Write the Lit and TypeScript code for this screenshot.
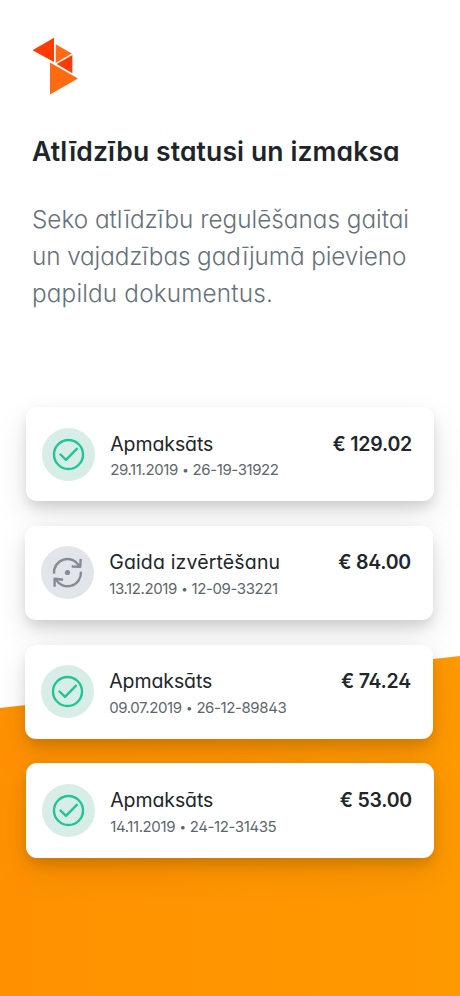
import { LitElement, html, css, svg } from "lit";
import { customElement, property } from "lit/decorators.js";
import { classMap } from "lit/directives/class-map.js";

interface Claim {
  status: "paid" | "pending";
  title: string;
  date: string;
  number: string;
  amount: string;
  inset: boolean;
}

const CLAIMS: Claim[] = [
  { status: "paid", title: "Apmaksāts", date: "29.11.2019", number: "26-19-31922", amount: "€ 129.02", inset: true },
  { status: "pending", title: "Gaida izvērtēšanu", date: "13.12.2019", number: "12-09-33221", amount: "€ 84.00", inset: false },
  { status: "paid", title: "Apmaksāts", date: "09.07.2019", number: "26-12-89843", amount: "€ 74.24", inset: false },
  { status: "paid", title: "Apmaksāts", date: "14.11.2019", number: "24-12-31435", amount: "€ 53.00", inset: true },
];

const paidIcon = svg`
  <circle cx="0" cy="0" r="14.5" />
  <path d="M-8 0 L-2.5 5.4 L8.3 -5.7" />`;

const pendingIcon = svg`
  <path d="M-13.4 1.2 A13.4 13.4 0 0 1 11.6 -6.7 M13.2 -13.6 L12.7 -5.6 L4.2 -6" />
  <path d="M13.4 -0.8 A13.4 13.4 0 0 1 -11.6 7 M-12.9 14.2 V6.3 L-4.4 7.2" />
  <circle class="dot" cx="0" cy="0" r="2.6" />`;

@customElement("claim-card")
export class ClaimCard extends LitElement {
  @property({ attribute: false }) claim!: Claim;

  static styles = css`
    :host {
      display: block;
    }
    .card {
      box-sizing: border-box;
      height: 94.3px;
      display: flex;
      align-items: flex-start;
      padding: 20.5px 21.5px 0 15.5px;
      border-radius: 11px;
      background: #fff;
      box-shadow: 0 14px 36px rgba(0, 0, 0, 0.09), 0 7px 13px -1px rgba(0, 0, 0, 0.14);
    }
    .icon {
      width: 53px;
      height: 53px;
      flex: none;
      border-radius: 50%;
    }
    .icon svg {
      display: block;
      width: 53px;
      height: 53px;
      fill: none;
      stroke-width: 2.4;
      stroke-linejoin: round;
    }
    .paid {
      background: #d8ede6;
      stroke: #20c596;
      stroke-linecap: round;
    }
    .pending {
      background: #e2e5ea;
      stroke: #858b95;
    }
    .dot {
      fill: #858b95;
      stroke: none;
    }
    .text {
      flex: 1;
      margin-left: 15.4px;
      white-space: nowrap;
    }
    .title,
    .amount {
      font-size: 19.5px;
      line-height: 28px;
      margin-top: 2px;
      color: #20262b;
    }
    .title {
      letter-spacing: -0.08px;
    }
    .title.long {
      letter-spacing: 0.15px;
    }
    .amount {
      font-weight: 600;
      letter-spacing: -0.22px;
      white-space: nowrap;
    }
    .meta {
      font-size: 15px;
      line-height: 20px;
      margin-top: 2.8px;
      letter-spacing: -0.4px;
      color: #5d666c;
    }
    .sep {
      font-size: 11.5px;
      vertical-align: 1px;
      line-height: 1;
      margin: 0 0.5px;
    }
  `;

  render() {
    const c = this.claim;
    return html`
      <div class="card">
        <div class=${classMap({ icon: true, [c.status]: true })}>
          <svg viewBox="-26.5 -26.5 53 53">${c.status === "paid" ? paidIcon : pendingIcon}</svg>
        </div>
        <div class="text">
          <div class=${classMap({ title: true, long: c.title.length > 12 })}>${c.title}</div>
          <div class="meta">${c.date} <span class="sep">•</span> ${c.number}</div>
        </div>
        <div class="amount">${c.amount}</div>
      </div>
    `;
  }
}

@customElement("app-root")
export class AppRoot extends LitElement {
  static styles = css`
    :host {
      display: block;
      box-sizing: border-box;
      width: 460px;
      height: 996px;
      overflow: hidden;
      padding-top: 36px;
      background: #fff;
      position: relative;
      font-family: Inter, "Liberation Sans", sans-serif;
      font-feature-settings: "cv11", "cv02";
    }
    .slope {
      position: absolute;
      inset: 656px 0 0 0;
      background: linear-gradient(90deg, #ff9100, #ff9900);
      clip-path: polygon(0 52px, 100% 0, 100% 100%, 0 100%);
    }
    .logo {
      display: block;
      width: 50px;
      height: 60px;
      margin-left: 30px;
    }
    h1 {
      margin: 37px 0 0 32px;
      font-size: 26.5px;
      line-height: 36px;
      font-weight: 600;
      letter-spacing: 0.12px;
      color: #1e252a;
      white-space: nowrap;
    }
    p {
      margin: 32px 0 0 32px;
      font-size: 24.3px;
      line-height: 37px;
      font-weight: 300;
      color: #66717b;
      white-space: nowrap;
    }
    .tight {
      letter-spacing: -0.1px;
    }
    .loose {
      letter-spacing: 0.17px;
    }
    .list {
      position: relative;
      margin-top: 95.2px;
      display: flex;
      flex-direction: column;
      gap: 24.4px;
    }
    claim-card {
      margin: 0 27.5px 0 25.3px;
    }
    claim-card.inset {
      margin: 0 26.5px 0 26.3px;
    }
  `;

  render() {
    return html`
      <div class="slope"></div>
      <svg class="logo" viewBox="30 36 50 60">
        <path fill="#ff3b05" d="M32.5 50.2 L54 37.7 V61.9 Z" />
        <path fill="#ff6a13" d="M55.7 44.2 L71.8 53.6 L55.7 62.9 Z" />
        <path fill="#ff3b05" d="M72.4 55 V73.2 L56.7 64.1 Z" />
        <path fill="#ff6a13" d="M50 62.5 L78 78.4 L50 94.5 Z" />
      </svg>
      <h1>Atlīdzību statusi un izmaksa</h1>
      <p>
        Seko atlīdzību regulēšanas gaitai<br />
        <span class="tight">un vajadzības gadījumā pievieno</span><br />
        <span class="loose">papildu dokumentus.</span>
      </p>
      <div class="list">
        ${CLAIMS.map((c) => html`<claim-card class=${classMap({ inset: c.inset })} .claim=${c}></claim-card>`)}
      </div>
    `;
  }
}
